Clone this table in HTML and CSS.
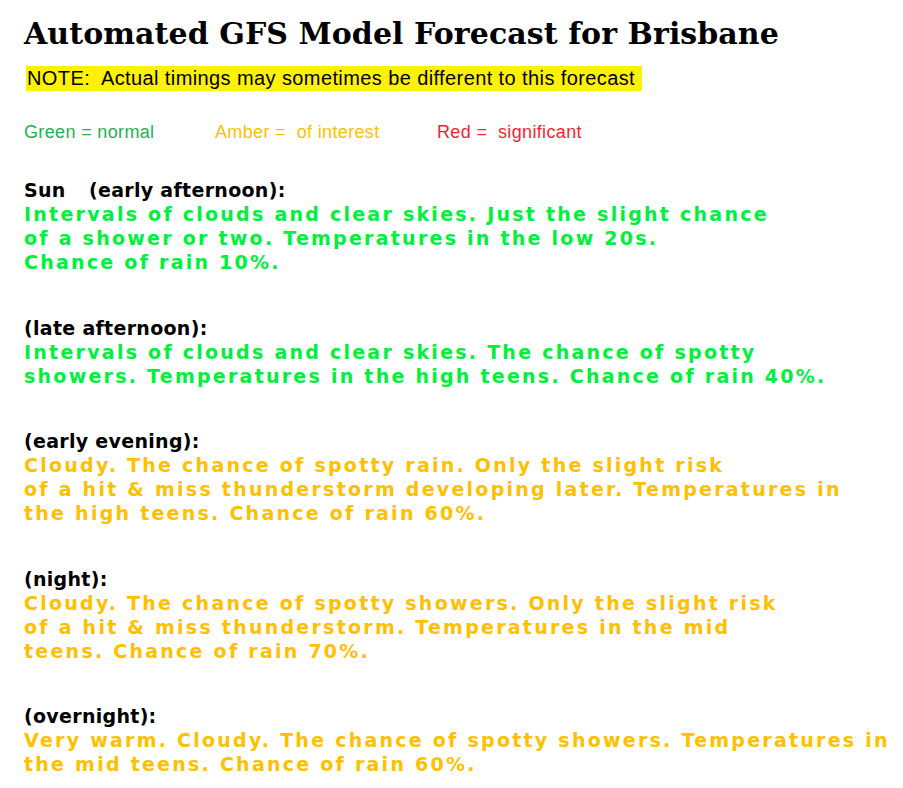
FILE: index.html
```html
<!DOCTYPE html>
<html lang="en">
<head>
<meta charset="utf-8">
<title>Automated GFS Model Forecast for Brisbane</title>
<link rel="stylesheet" href="styles.css">
</head>
<body>
<div class="page">
  <h1 class="title">Automated GFS Model Forecast for Brisbane</h1>
  <div class="note-row"><span class="note">NOTE:  Actual timings may sometimes be different to this forecast </span></div>
  <div class="legend">
    <span class="leg leg-green">Green = normal</span>
    <span class="leg leg-amber">Amber =  of interest</span>
    <span class="leg leg-red">Red =  significant</span>
  </div>
  <div class="forecast">
    <section class="period">
      <div class="label"><span class="day">Sun</span>(early afternoon):</div>
      <div class="text green">Intervals of clouds and clear skies. Just the slight chance</div>
      <div class="text green">of a shower or two. Temperatures in the low 20s.</div>
      <div class="text green">Chance of rain 10%.</div>
    </section>
    <section class="period">
      <div class="label">(late afternoon):</div>
      <div class="text green">Intervals of clouds and clear skies. The chance of spotty</div>
      <div class="text green">showers. Temperatures in the high teens. Chance of rain 40%.</div>
    </section>
    <section class="period">
      <div class="label">(early evening):</div>
      <div class="text amber">Cloudy. The chance of spotty rain. Only the slight risk</div>
      <div class="text amber">of a hit &amp; miss thunderstorm developing later. Temperatures in</div>
      <div class="text amber">the high teens. Chance of rain 60%.</div>
    </section>
    <section class="period">
      <div class="label">(night):</div>
      <div class="text amber">Cloudy. The chance of spotty showers. Only the slight risk</div>
      <div class="text amber">of a hit &amp; miss thunderstorm. Temperatures in the mid</div>
      <div class="text amber">teens. Chance of rain 70%.</div>
    </section>
    <section class="period">
      <div class="label">(overnight):</div>
      <div class="text amber">Very warm. Cloudy. The chance of spotty showers. Temperatures in</div>
      <div class="text amber">the mid teens. Chance of rain 60%.</div>
    </section>
  </div>
</div>
</body>
</html>
```

FILE: styles.css
```css
html, body {
  margin: 0;
  padding: 0;
  background: #ffffff;
}

.page {
  padding: 0 0 0 24px;
}

.title {
  margin: 19px 0 0 0;
  font-family: "DejaVu Serif", "Liberation Serif", serif;
  font-weight: bold;
  font-size: 30px;
  line-height: 30px;
  letter-spacing: 0.07px;
  color: #000000;
  white-space: pre;
}

.note-row {
  margin-top: 17px;
  height: 25px;
}

.note {
  display: inline-block;
  margin-left: 2px;
  padding: 0 1px 0 1px;
  background: #fff200;
  font-family: "Liberation Sans", Arial, sans-serif;
  font-size: 20px;
  line-height: 25px;
  letter-spacing: 0.4px;
  color: #000000;
  white-space: pre;
}

.legend {
  margin-top: 29px;
  display: flex;
  font-family: "Liberation Sans", Arial, sans-serif;
  font-size: 18px;
  line-height: 24px;
  letter-spacing: 0.35px;
  white-space: pre;
}

.leg {
  display: block;
}

.leg-green {
  width: 191px;
  color: #1db14f;
}

.leg-amber {
  width: 222px;
  color: #ffc000;
}

.leg-red {
  color: #fa1e32;
}

.forecast {
  margin-top: 34px;
  display: flex;
  flex-direction: column;
  gap: 41.5px;
}

.period {
  display: flex;
  flex-direction: column;
}

.label,
.text {
  font-family: "DejaVu Sans", Verdana, sans-serif;
  font-weight: bold;
  font-size: 19px;
  line-height: 24px;
  white-space: pre;
}

.text {
  letter-spacing: 2.25px;
}

.label {
  color: #000000;
  letter-spacing: 0.3px;
}

.day {
  display: inline-block;
  width: 65px;
}

.green {
  color: #00f03c;
}

.amber {
  color: #ffc000;
}
```
